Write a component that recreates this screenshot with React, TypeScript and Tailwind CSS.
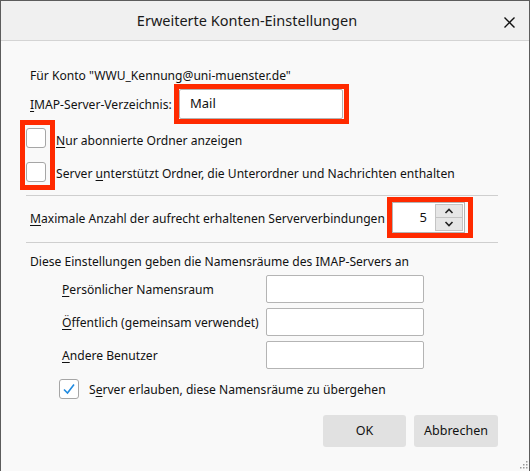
import React from 'react';

const Key: React.FC<{ children: React.ReactNode }> = ({ children }) => (
  <span className="underline decoration-1 underline-offset-2">{children}</span>
);

const Checkbox: React.FC<{ checked?: boolean }> = ({ checked }) => (
  <div className="w-[20px] h-[20px] shrink-0 bg-white border border-[#a6a6a6] rounded-[3px] flex items-center justify-center">
    {checked && (
      <svg width="14" height="14" viewBox="0 0 14 14">
        <path d="M2 7.5 L5.5 11 L12 2.5" fill="none" stroke="#1f8ae0" strokeWidth="1.6" />
      </svg>
    )}
  </div>
);

const TextBox: React.FC<{ value?: string; className?: string }> = ({ value, className }) => (
  <div className={`bg-white border border-[#b4b4b4] rounded-[2px] flex items-center px-[10px] ${className ?? ''}`}>
    {value}
  </div>
);

const Chevron: React.FC<{ up?: boolean }> = ({ up }) => (
  <svg width="10" height="6" viewBox="0 0 10 6">
    <path d={up ? 'M1.5 5 L5 1.5 L8.5 5' : 'M1.5 1 L5 4.5 L8.5 1'} fill="none" stroke="#222" strokeWidth="1.6" />
  </svg>
);

export default function App() {
  return (
    <div className="relative w-[530px] h-[471px] bg-[#f9f9f9] border-t border-l border-r border-[#5c5c5c] text-[12.1px] text-[#111] font-['Noto_Sans',sans-serif] overflow-hidden whitespace-nowrap">
      {/* title bar */}
      <div className="h-[40px] bg-[#f0f0f0] border-b border-[#d4d4d4] flex items-center justify-center relative">
        <span className="text-[14.5px] text-[#1a1a1a] -ml-[36px]">Erweiterte Konten-Einstellungen</span>
        <svg className="absolute right-[14px] top-[16px]" width="11" height="11" viewBox="0 0 11 11">
          <path d="M0.5 0.5 L10.5 10.5 M10.5 0.5 L0.5 10.5" stroke="#111" strokeWidth="1.4" />
        </svg>
      </div>

      <div className="pl-[25px] pr-[31px] pt-[24px] flex flex-col">
        <div className="h-[19px] leading-[17px] pt-[2px] ml-[4px]">Für Konto "WWU_Kennung@uni-muenster.de"</div>

        {/* IMAP directory */}
        <div className="flex items-center ml-[4px]">
          <span className="w-[144px] pt-[3px]"><Key>I</Key>MAP-Server-Verzeichnis:</span>
          <div className="border-[5px] border-[#ff2a00] pr-px">
            <TextBox value="Mail" className="w-[164px] h-[30px] text-[13px]" />
          </div>
        </div>

        {/* checkboxes */}
        <div className="flex -mt-[4px]">
          <div className="-ml-[6px] border-[5px] border-[#ff2a00] pl-px pr-[4px] pt-[3px] pb-[3px] flex flex-col gap-[14px]">
            <Checkbox />
            <Checkbox />
          </div>
          <div className="flex flex-col gap-[14px] pt-[10px] pl-px">
            <div className="h-[20px] leading-[20px] pt-[1px]"><Key>N</Key>ur abonnierte Ordner anzeigen</div>
            <div className="h-[20px] leading-[20px]">Server <Key>u</Key>nterstützt Ordner, die Unterordner und Nachrichten enthalten</div>
          </div>
        </div>

        <div className="mt-[5px] h-px bg-[#cfcfcf]" />

        {/* max connections */}
        <div className="flex items-center mt-px ml-[4px]">
          <span className="w-[357px] pt-[4px]"><Key>M</Key>aximale Anzahl der aufrecht erhaltenen Serververbindungen</span>
          <div className="border-[5px] border-[#ff2a00] pr-[3px]">
            <div className="w-[73px] h-[31px] bg-white border border-[#b4b4b4] flex">
              <div className="flex-1 flex items-center justify-end pr-[8px] text-[13px]">5</div>
              <div className="w-[28px] flex flex-col my-px mr-px">
                <div className="flex-1 bg-[#e6e6e6] border border-[#c4c4c4] flex items-center justify-center"><Chevron up /></div>
                <div className="flex-1 bg-[#e6e6e6] border border-t-0 border-[#c4c4c4] flex items-center justify-center"><Chevron /></div>
              </div>
            </div>
          </div>
        </div>

        <div className="mt-[4px] h-px bg-[#cfcfcf]" />

        {/* namespaces */}
        <div className="mt-[9px] h-[20px] leading-[20px] ml-[4px]">Diese Einstellungen geben die Namensräume des IMAP-Servers an</div>

        <div className="mt-[3px] flex flex-col gap-[5px] pl-[36px]">
          {[
            [<Key key="p">P</Key>, 'ersönlicher Namensraum'],
            [<Key key="o">Ö</Key>, 'ffentlich (gemeinsam verwendet)'],
            [<Key key="a">A</Key>, 'ndere Benutzer'],
          ].map(([k, rest], i) => (
            <div key={i} className="flex items-center">
              <span className="w-[204px] pt-[2px]">{k}{rest}</span>
              <TextBox className="w-[158px] h-[28px]" />
            </div>
          ))}
        </div>

        <div className="mt-[9px] pl-[33px] flex items-center gap-[10px]">
          <Checkbox checked />
          <span className="pt-[3px]">S<Key>e</Key>rver erlauben, diese Namensräume zu übergehen</span>
        </div>

        <div className="mt-[16px] flex justify-end gap-[8px]">
          <button className="w-[83px] h-[32px] bg-[#e1e1e1] rounded-[3px] text-[12.5px]">OK</button>
          <button className="w-[84px] h-[32px] bg-[#e1e1e1] rounded-[3px] text-[12.5px]">Abbrechen</button>
        </div>
      </div>

      {/* resize grip */}
      <svg className="absolute right-[1px] bottom-[2px]" width="9" height="9" viewBox="0 0 9 9">
        {[[7, 1], [4, 4], [7, 4], [1, 7], [4, 7], [7, 7]].map(([x, y], i) => (
          <rect key={i} x={x} y={y} width="1.5" height="1.5" fill="#9a9a9a" />
        ))}
      </svg>
    </div>
  );
}
